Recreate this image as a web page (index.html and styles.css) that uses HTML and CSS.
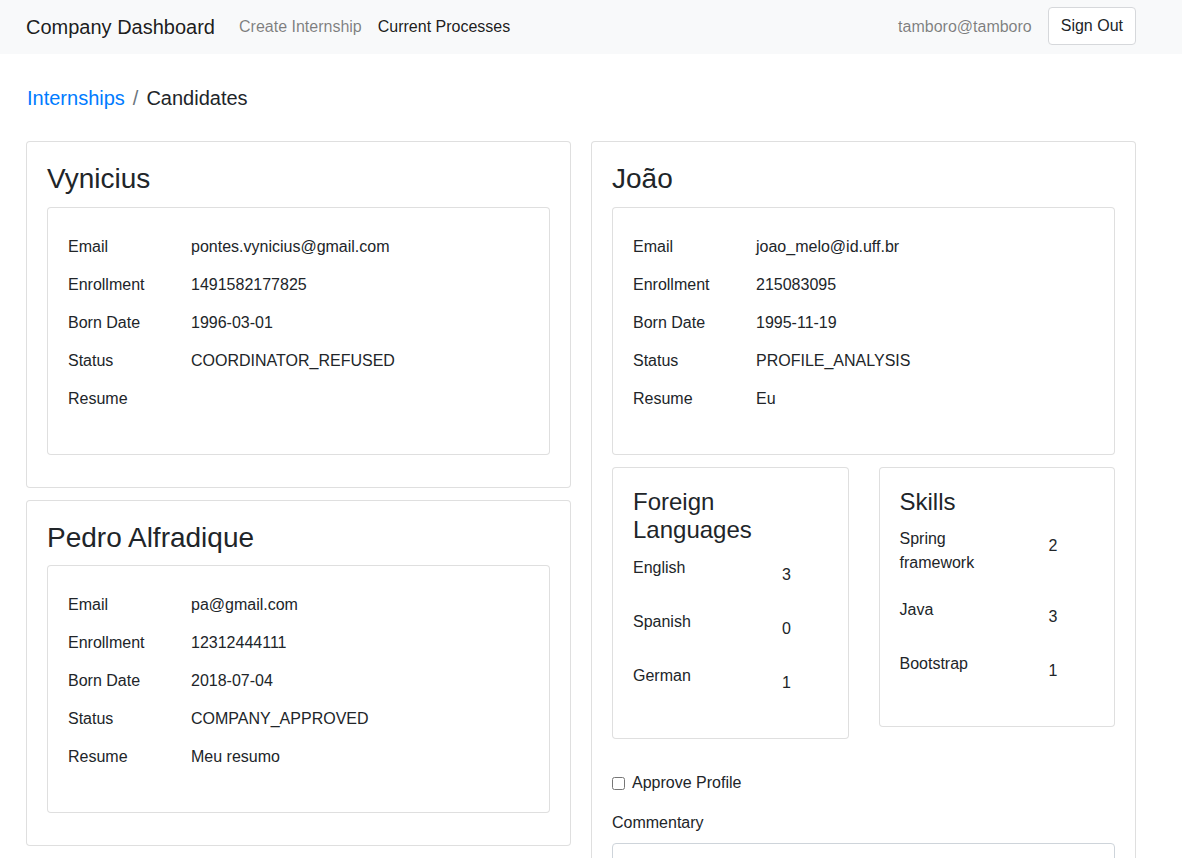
FILE: index.html
```html
<!DOCTYPE html>
<html lang="en">
<head>
<meta charset="utf-8">
<title>Company Dashboard</title>
<link rel="stylesheet" href="styles.css">
</head>
<body>
<nav class="navbar">
  <div class="nav-inner">
    <a class="brand" href="#">Company Dashboard</a>
    <a class="nav-link" href="#">Create Internship</a>
    <a class="nav-link active" href="#">Current Processes</a>
    <div class="nav-right">
      <span class="user">tamboro@tamboro</span>
      <button class="btn">Sign Out</button>
    </div>
  </div>
</nav>

<main class="container">
  <ol class="breadcrumb">
    <li><a href="#">Internships</a></li>
    <li class="sep">/</li>
    <li class="current">Candidates</li>
  </ol>

  <div class="columns">
    <div class="col">
      <div class="card candidate">
        <h3 class="card-title">Vynicius</h3>
        <div class="card details">
          <div class="info">
            <span>Email</span><span>pontes.vynicius@gmail.com</span>
            <span>Enrollment</span><span>1491582177825</span>
            <span>Born Date</span><span>1996-03-01</span>
            <span>Status</span><span>COORDINATOR_REFUSED</span>
            <span>Resume</span><span></span>
          </div>
        </div>
      </div>
      <div class="card candidate">
        <h3 class="card-title">Pedro Alfradique</h3>
        <div class="card details">
          <div class="info">
            <span>Email</span><span>pa@gmail.com</span>
            <span>Enrollment</span><span>12312444111</span>
            <span>Born Date</span><span>2018-07-04</span>
            <span>Status</span><span>COMPANY_APPROVED</span>
            <span>Resume</span><span>Meu resumo</span>
          </div>
        </div>
      </div>
    </div>

    <div class="col">
      <div class="card candidate">
        <h3 class="card-title">João</h3>
        <div class="card details">
          <div class="info">
            <span>Email</span><span>joao_melo@id.uff.br</span>
            <span>Enrollment</span><span>215083095</span>
            <span>Born Date</span><span>1995-11-19</span>
            <span>Status</span><span>PROFILE_ANALYSIS</span>
            <span>Resume</span><span>Eu</span>
          </div>
        </div>
        <div class="subcards">
          <div class="card sub">
            <h4 class="sub-title">Foreign Languages</h4>
            <div class="pair"><div class="pl">English</div><div class="pv">3</div></div>
            <div class="pair"><div class="pl">Spanish</div><div class="pv">0</div></div>
            <div class="pair"><div class="pl">German</div><div class="pv">1</div></div>
          </div>
          <div class="card sub">
            <h4 class="sub-title">Skills</h4>
            <div class="pair"><div class="pl">Spring framework</div><div class="pv">2</div></div>
            <div class="pair"><div class="pl">Java</div><div class="pv">3</div></div>
            <div class="pair"><div class="pl">Bootstrap</div><div class="pv">1</div></div>
          </div>
        </div>
        <form class="review">
          <label class="check"><input type="checkbox"> Approve Profile</label>
          <label class="field-label" for="comment">Commentary</label>
          <textarea id="comment" rows="3"></textarea>
        </form>
      </div>
    </div>
  </div>
</main>
</body>
</html>
```

FILE: styles.css
```css
* { box-sizing: border-box; }

body {
  margin: 0;
  font-family: "Liberation Sans", Arial, sans-serif;
  font-size: 16px;
  line-height: 1.5;
  color: #212529;
  background: #fff;
}

a { text-decoration: none; }

.navbar {
  background: #f8f9fa;
  padding: 7px 46px 9px 26px;
}

.nav-inner {
  display: flex;
  align-items: center;
  height: 38px;
}

.brand {
  font-size: 20px;
  line-height: 30px;
  color: rgba(0, 0, 0, 0.9);
  margin-right: 16px;
  position: relative;
  top: 1px;
}

.nav-link {
  padding: 0 8px;
  color: rgba(0, 0, 0, 0.5);
  position: relative;
  top: 1px;
}

.nav-link.active { color: rgba(0, 0, 0, 0.9); }

.nav-right {
  margin-left: auto;
  display: flex;
  align-items: center;
  gap: 16px;
}

.user { color: rgba(0, 0, 0, 0.5); position: relative; top: 1px; }

.btn {
  font-family: inherit;
  font-size: 16px;
  line-height: 24px;
  padding: 6px 12px;
  background: #fff;
  color: #212529;
  border: 1px solid #d6d8db;
  border-radius: 4px;
  height: 38px;
}

.container {
  margin: 0 46px 0 26px;
}

.breadcrumb {
  list-style: none;
  display: flex;
  margin: 29px 0 28px 1px;
  padding: 0;
  font-size: 20px;
  line-height: 30px;
}

.breadcrumb a { color: #007bff; }
.breadcrumb .sep { color: #6c757d; padding: 0 8px; }
.breadcrumb .current { color: #212529; }

.columns {
  display: grid;
  grid-template-columns: minmax(0, 1fr) minmax(0, 1fr);
  column-gap: 20px;
  align-items: start;
}

.card {
  border: 1px solid rgba(0, 0, 0, 0.125);
  border-radius: 4px;
  background: #fff;
}

.candidate {
  padding: 20px;
  margin-bottom: 12px;
}

.card-title {
  margin: 0 0 11px;
  font-size: 28px;
  font-weight: 400;
  line-height: 1.2;
}

.details {
  padding: 20px 20px 36px;
  margin-bottom: 12px;
}

.info {
  display: grid;
  grid-template-columns: 123px 1fr;
  grid-auto-rows: 38px;
  align-items: center;
}

.subcards {
  display: grid;
  grid-template-columns: minmax(0, 1fr) minmax(0, 1fr);
  column-gap: 30px;
  align-items: start;
}

.sub {
  padding: 20px;
  margin-bottom: 12px;
}

.sub-title {
  margin: 0 0 11px;
  font-size: 24px;
  font-weight: 400;
  line-height: 1.2;
}

.pair {
  display: grid;
  grid-template-columns: minmax(0, 1fr) minmax(0, 1fr);
  column-gap: 30px;
  align-items: start;
}

.pl { margin-bottom: 23px; }

.pv {
  text-align: center;
  padding-top: 7px;
  margin-bottom: 23px;
}

.review {
  display: flex;
  flex-direction: column;
  padding-top: 20px;
}

.check {
  display: flex;
  align-items: center;
  gap: 7px;
  margin-bottom: 16px;
}

.check input {
  margin: 0;
  width: 13px;
  height: 13px;
}

.field-label { margin-bottom: 8px; }

textarea {
  font-family: inherit;
  font-size: 16px;
  width: 100%;
  border: 1px solid #ced4da;
  border-radius: 4px;
  padding: 6px 12px;
  resize: vertical;
}
```
